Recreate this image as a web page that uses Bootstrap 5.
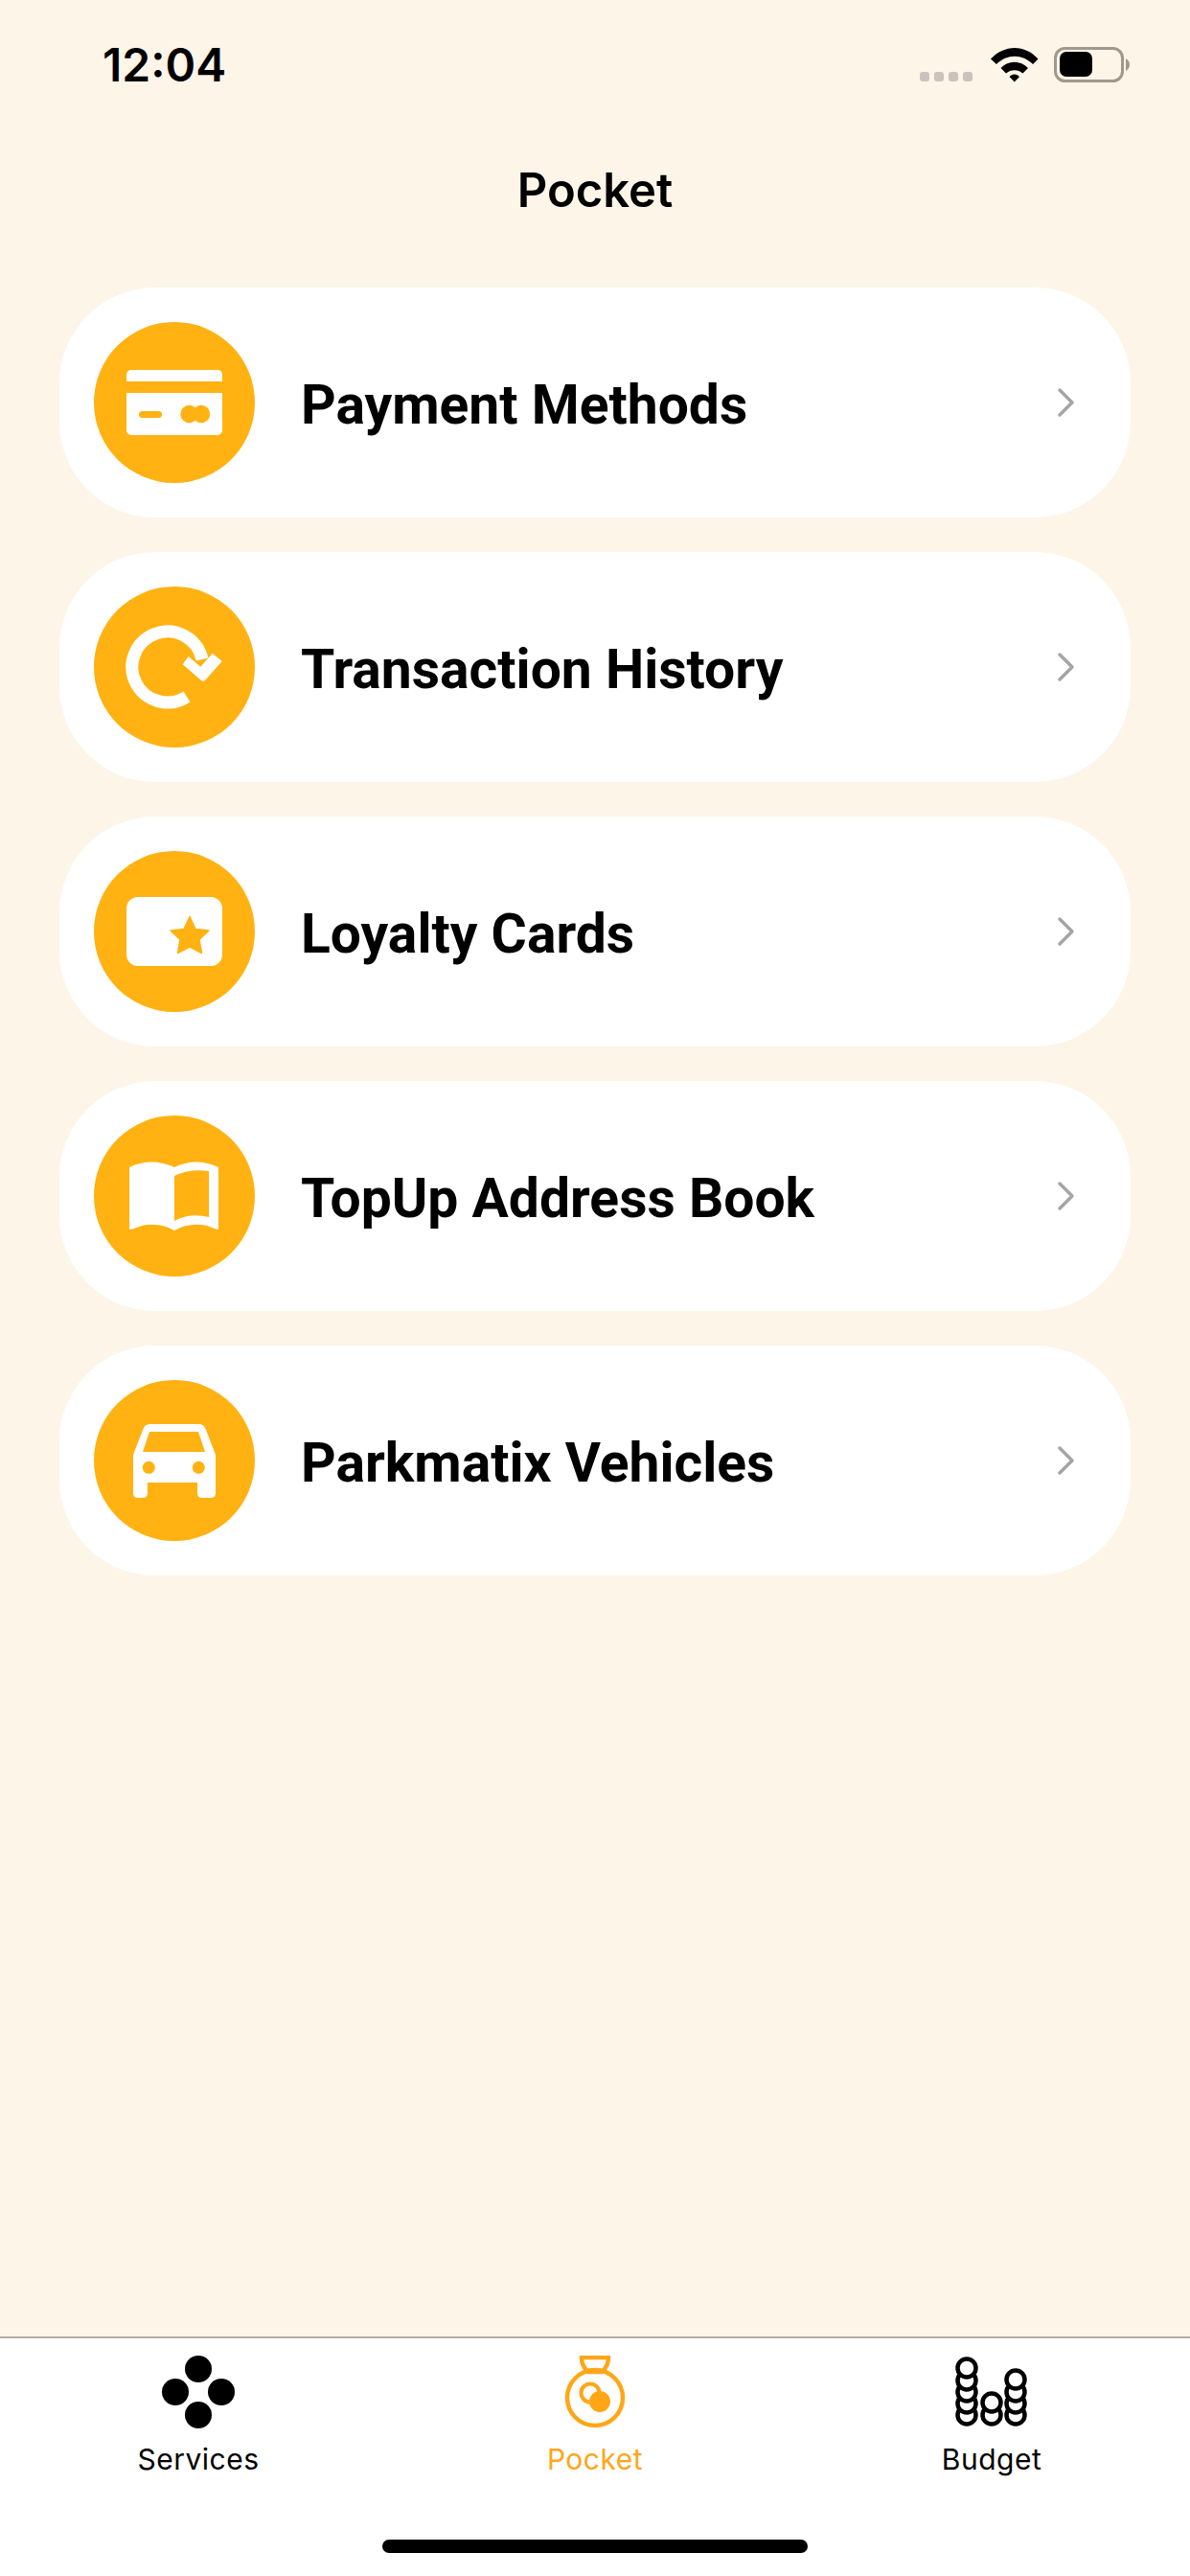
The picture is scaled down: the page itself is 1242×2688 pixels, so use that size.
<!DOCTYPE html>
<html lang="en">
<head>
    <meta charset="UTF-8">
    <meta name="viewport" content="width=device-width, initial-scale=1.0">
    <title>Pocket</title>
    <link href="https://cdn.jsdelivr.net/npm/bootstrap@5.3.0/dist/css/bootstrap.min.css" rel="stylesheet">
    <style>
        body { background: #fdf5e8; color: #000; font-family: Inter, "Liberation Sans", sans-serif; }
        .app-screen { height: 2688px; }
        .status-row { height: 100px; padding: 29px 62px 0 107px; }
        .status-time { font-size: 48px; font-weight: 600; line-height: 78px; }
        .status-dot { width: 10px; height: 10px; border-radius: 3px; background: #cbc3bb; }
        .status-dots { gap: 5px; margin: 46px 19px 0 0; }
        .status-icons { margin-top: 20px; }
        .page-title { height: 200px; padding-top: 68px; font-size: 49px; font-weight: 600; line-height: 62px; }
        .pocket-list { gap: 36px; padding: 0 62px; }
        .pocket-row { height: 240px; border-radius: 100px; background: #fff; padding: 0 56px 0 36px; color: #000; text-decoration: none; }
        .pocket-disc { width: 168px; height: 168px; border-radius: 50%; background: #ffb212; flex: none; }
        .pocket-name { font-family: Roboto, "Liberation Sans", sans-serif; font-weight: 700; font-size: 57px; margin: 6px 0 0 48px; }
        .tab-strip { height: 250px; background: #fff; border-top: 2px solid #b5aca3; }
        .tab-link { width: 414px; height: 136px; color: #000; text-decoration: none; font-size: 30px; letter-spacing: .5px; line-height: 36px; }
        .tab-link.is-active { color: #ffa616; }
        .tab-link svg { display: block; margin: 18px auto 14px; }
        .home-bar { width: 444px; height: 14px; border-radius: 7px; background: #000; margin: 74px auto 0; }
    </style>
</head>
<body>
    <div class="app-screen d-flex flex-column">
        <div class="status-row d-flex align-items-start">
            <div class="status-time me-auto">12:04</div>
            <div class="status-dots d-flex">
                <span class="status-dot"></span><span class="status-dot"></span><span class="status-dot"></span><span class="status-dot"></span>
            </div>
            <div class="status-icons d-flex">
                <svg width="50" height="37" viewBox="0 0 50 37" class="me-3">
                    <path d="M0 12.5C14-3 36-3 49.500 12.500L44 18C33 7 17 7 6 18Z" fill="#000"/>
                    <path d="M10.500 22C18.500 13.500 31 13.500 39 22L33.500 27.500C28.500 23 21 23 16 27.500Z" fill="#000"/>
                    <path d="M19.500 31C22.500 27.500 27 27.500 30 31L24.800 36.500Z" fill="#000"/>
                </svg>
                <svg width="80" height="38" viewBox="0 0 80 38">
                    <rect x="1.500" y="1.500" width="70" height="34" rx="10" fill="none" stroke="#a0988c" stroke-width="3"/>
                    <rect x="6" y="5" width="34" height="26" rx="7" fill="#000"/>
                    <path d="M75 12C78 14 79 16 79 18.500C79 21 78 23 75 25Z" fill="#a0988c"/>
                </svg>
            </div>
        </div>

        <div class="page-title text-center">Pocket</div>

        <div class="pocket-list d-flex flex-column">
            <a href="#" class="pocket-row d-flex align-items-center">
                <span class="pocket-disc">
                    <svg width="168" height="168" viewBox="0 0 168 168">
                        <path d="M34 62V55a5 5 0 0 1 5-5h90a5 5 0 0 1 5 5v7Z" fill="#fff"/>
                        <path d="M34 74h100v39a5 5 0 0 1-5 5H39a5 5 0 0 1-5-5Z" fill="#fff"/>
                        <rect x="47" y="93" width="24" height="7" rx="3.500" fill="#ffb212"/>
                        <circle cx="99.500" cy="96" r="9.200" fill="#ffb212"/>
                        <circle cx="112" cy="96" r="9.200" fill="#ffb212"/>
                    </svg>
                </span>
                <span class="pocket-name me-auto">Payment Methods</span>
                <svg width="22" height="32" viewBox="0 0 22 32"><path d="M4 3L17 16L4 29" fill="none" stroke="#a5a5a5" stroke-width="3.500" stroke-linecap="round" stroke-linejoin="round"/></svg>
            </a>
            <a href="#" class="pocket-row d-flex align-items-center">
                <span class="pocket-disc">
                    <svg width="168" height="168" viewBox="0 0 168 168">
                        <path d="M113 76A37 37 0 1 0 97 115" fill="none" stroke="#fff" stroke-width="13"/>
                        <path d="M92.700 81.300L98.700 73L111.300 83.700L123.700 69.700L133.700 78L116 98Q114 99.500 112 98Z" fill="#fff"/>
                    </svg>
                </span>
                <span class="pocket-name me-auto">Transaction History</span>
                <svg width="22" height="32" viewBox="0 0 22 32"><path d="M4 3L17 16L4 29" fill="none" stroke="#a5a5a5" stroke-width="3.500" stroke-linecap="round" stroke-linejoin="round"/></svg>
            </a>
            <a href="#" class="pocket-row d-flex align-items-center">
                <span class="pocket-disc">
                    <svg width="168" height="168" viewBox="0 0 168 168">
                        <rect x="34" y="48" width="100" height="72" rx="12" fill="#fff"/>
                        <path d="M100 68.500L106 81.500L120 83L110 92.500L112.500 106.500L100 100L87.500 106.500L90 92.500L80 83L94 81.500Z" fill="#ffb212" stroke="#ffb212" stroke-width="1.500" stroke-linejoin="round"/>
                    </svg>
                </span>
                <span class="pocket-name me-auto">Loyalty Cards</span>
                <svg width="22" height="32" viewBox="0 0 22 32"><path d="M4 3L17 16L4 29" fill="none" stroke="#a5a5a5" stroke-width="3.500" stroke-linecap="round" stroke-linejoin="round"/></svg>
            </a>
            <a href="#" class="pocket-row d-flex align-items-center">
                <span class="pocket-disc">
                    <svg width="168" height="168" viewBox="0 0 168 168">
                        <path fill-rule="evenodd" fill="#fff" d="M37 54Q60 43 84 54Q107 43 130 54V119Q125 118 118 115Q100 111 84 120Q68 111 50 115Q43 118 37 119ZM84 63V110Q100 101 120 106V58Q100 55 84 63Z"/>
                    </svg>
                </span>
                <span class="pocket-name me-auto">TopUp Address Book</span>
                <svg width="22" height="32" viewBox="0 0 22 32"><path d="M4 3L17 16L4 29" fill="none" stroke="#a5a5a5" stroke-width="3.500" stroke-linecap="round" stroke-linejoin="round"/></svg>
            </a>
            <a href="#" class="pocket-row d-flex align-items-center">
                <span class="pocket-disc">
                    <svg width="168" height="168" viewBox="0 0 168 168">
                        <path fill-rule="evenodd" fill="#fff" d="M58 46H110Q115 46 117 52L127 78V118Q127 123 122 123H113Q108 123 108 118V107H56V118Q56 123 51 123H46Q41 123 41 118V78L51 52Q53 46 58 46ZM58 54L51 75H116L109 54Z"/>
                        <circle cx="57.300" cy="91.300" r="6.500" fill="#ffb212"/>
                        <circle cx="109.300" cy="91.300" r="6.500" fill="#ffb212"/>
                    </svg>
                </span>
                <span class="pocket-name me-auto">Parkmatix Vehicles</span>
                <svg width="22" height="32" viewBox="0 0 22 32"><path d="M4 3L17 16L4 29" fill="none" stroke="#a5a5a5" stroke-width="3.500" stroke-linecap="round" stroke-linejoin="round"/></svg>
            </a>
        </div>

        <div class="tab-strip mt-auto">
            <div class="d-flex">
                <a href="#" class="tab-link text-center">
                    <svg width="76" height="76" viewBox="0 0 76 76">
                        <circle cx="38" cy="14" r="14"/><circle cx="14" cy="38" r="14"/><circle cx="62" cy="38" r="14"/><circle cx="38" cy="62" r="14"/>
                    </svg>
                    Services
                </a>
                <a href="#" class="tab-link is-active text-center">
                    <svg width="76" height="76" viewBox="0 0 76 76">
                        <path d="M24 2H52C52 9 50 13 45 17H31C26 13 24 9 24 2Z" fill="none" stroke="#ffa616" stroke-width="4.500"/>
                        <circle cx="38" cy="44" r="29" fill="none" stroke="#ffa616" stroke-width="4.500"/>
                        <circle cx="33" cy="39" r="9.500" fill="none" stroke="#ffa616" stroke-width="4"/>
                        <circle cx="43" cy="48" r="11" fill="#ffa616"/>
                    </svg>
                    Pocket
                </a>
                <a href="#" class="tab-link text-center">
                    <svg width="76" height="76" viewBox="0 0 76 76" fill="#fff" stroke="#000" stroke-width="4.500">
                        <circle cx="12" cy="62" r="9.500"/><circle cx="12" cy="50" r="9.500"/><circle cx="12" cy="38" r="9.500"/><circle cx="12" cy="26" r="9.500"/><circle cx="12" cy="13" r="9.500"/>
                        <circle cx="38" cy="62" r="9.500"/><circle cx="38" cy="49" r="9.500"/>
                        <circle cx="63" cy="62" r="9.500"/><circle cx="63" cy="50" r="9.500"/><circle cx="63" cy="38" r="9.500"/><circle cx="63" cy="25" r="9.500"/>
                    </svg>
                    Budget
                </a>
            </div>
            <div class="home-bar"></div>
        </div>
    </div>
    <script src="https://cdn.jsdelivr.net/npm/bootstrap@5.3.0/dist/js/bootstrap.bundle.min.js"></script>
</body>
</html>
